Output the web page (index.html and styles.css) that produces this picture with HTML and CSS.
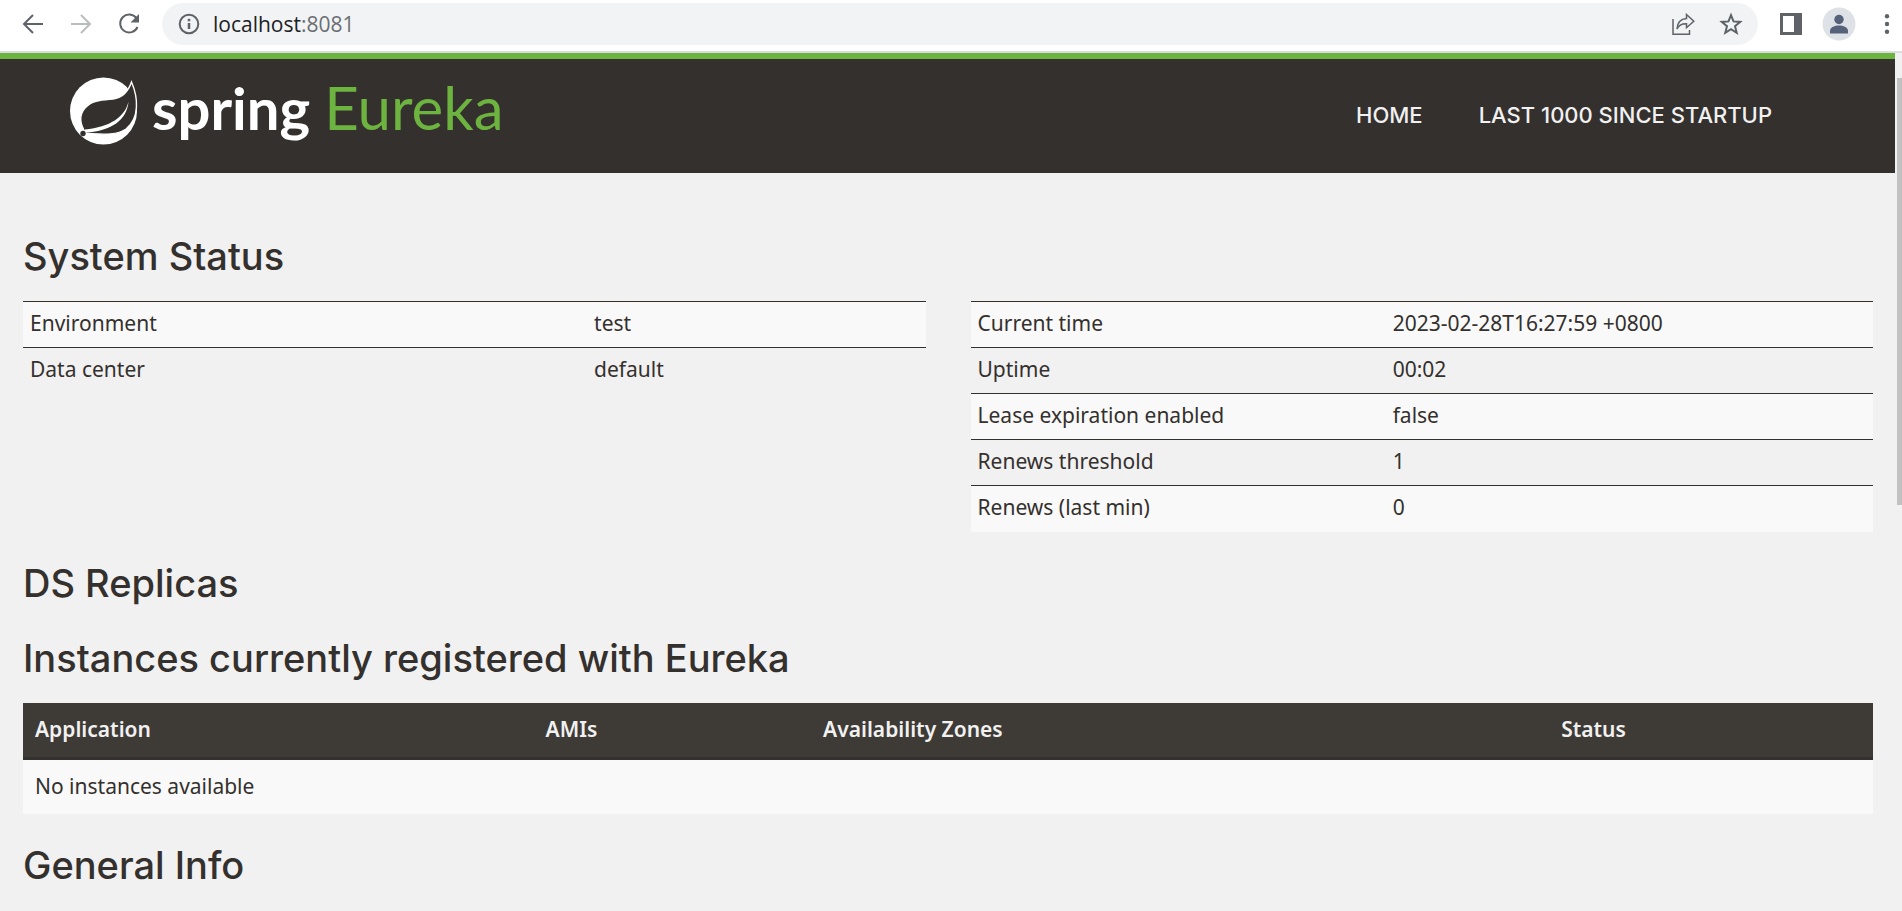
FILE: index.html
```html
<!DOCTYPE html>
<html lang="en">
<head>
<meta charset="utf-8">
<title>Eureka</title>
<link rel="stylesheet" href="styles.css">
</head>
<body>
<div class="toolbar">
  <button class="tool" type="button" aria-label="Back"><svg width="24" height="24" viewBox="0 0 24 24" class="line"><path d="M22 12H3M12 3l-9 9 9 9"/></svg></button>
  <button class="tool tool-off" type="button" aria-label="Forward"><svg width="24" height="24" viewBox="0 0 24 24" class="line"><path d="M2 12h19M12 3l9 9-9 9"/></svg></button>
  <button class="tool" type="button" aria-label="Reload"><svg width="24" height="24" viewBox="0 0 24 24" class="line"><path d="M19.5 6.200A9 9 0 1 0 20.500 15"/><path class="solid" d="M22 2v8.500h-8.500z"/></svg></button>
  <div class="address">
    <svg width="24" height="24" viewBox="0 0 24 24" class="line"><circle cx="12" cy="12" r="9.300"/><path d="M12 11v6" stroke-width="2.500"/><path d="M12 6.800v2.500" stroke-width="2.500"/></svg>
    <span class="url">localhost<span class="port">:8081</span></span>
    <button class="tool" type="button" aria-label="Share"><svg width="24" height="24" viewBox="0 0 24 24" class="line thin"><path d="M2 7v15.200h16.500V18"/><path d="M15.500 2.500l7.300 6.700-7.300 6.500v-4C10 11.500 7.500 13.500 6 17c.3-6 3.500-10 9.500-10.500z"/></svg></button>
    <button class="tool" type="button" aria-label="Bookmark"><svg width="24" height="24" viewBox="0 0 24 24" class="line"><path d="M12 3.200l2.500 6.200 6.700.5-5.200 4.300 1.700 6.600L12 17.200l-5.700 3.600L8 14.200 2.800 9.900l6.700-.5z"/></svg></button>
  </div>
  <button class="tool" type="button" aria-label="Side panel"><svg width="24" height="24" viewBox="0 0 24 24"><path fill="currentColor" fill-rule="evenodd" d="M1 1h22v22H1zM4 4v16h11V4z"/></svg></button>
  <button class="tool profile" type="button" aria-label="Profile"><svg width="34" height="34" viewBox="0 0 34 34"><circle cx="17" cy="17" r="16.500" fill="#dee1e6"/><g fill="#56617a"><circle cx="17" cy="12.500" r="4.700"/><path d="M8 26.500v-2.500c0-4 5-5.500 9-5.500s9 1.500 9 5.500v2.500z"/></g></svg></button>
  <button class="tool" type="button" aria-label="Menu"><svg width="8" height="24" viewBox="0 0 8 24" fill="currentColor"><circle cx="4" cy="4.300" r="2.200"/><circle cx="4" cy="12" r="2.200"/><circle cx="4" cy="19.700" r="2.200"/></svg></button>
</div>
<div class="view">
  <div class="page">
    <header class="navbar">
      <a class="brand" href="#" aria-label="Spring Eureka">
        <svg width="68" height="68" viewBox="0 0 68 68">
          <circle cx="33.500" cy="34" r="33.500" fill="#fff"/>
          <path fill="#34302d" d="M57 10L62 0H68V24L62 20z"/>
          <path fill="#34302d" stroke="#fff" stroke-width="1.400" d="M61.500 5C58 15 52 21 43 22 32 23 22 23 15 31 9 38 9 46 16 56.500 30 57 46 59 56 52 70 41 68 20 61.500 5z"/>
          <path fill="#fff" d="M58.500 24.500C55 40 40 50 15 52.500l-1 3.500C42 54 57 43 58.500 24.500z"/>
          <circle cx="13" cy="56.500" r="2.700" fill="#34302d"/>
        </svg>
        <span class="brand-name">spring</span>
        <span class="brand-product">Eureka</span>
      </a>
      <nav class="links"><a href="#">HOME</a><a href="#">LAST 1000 SINCE STARTUP</a></nav>
    </header>
    <main class="content">
      <h1>System Status</h1>
      <div class="columns">
        <table class="facts env">
          <tr><th scope="row">Environment</th><td>test</td></tr>
          <tr><th scope="row">Data center</th><td>default</td></tr>
        </table>
        <table class="facts runtime">
          <tr><th scope="row">Current time</th><td>2023-02-28T16:27:59 +0800</td></tr>
          <tr><th scope="row">Uptime</th><td>00:02</td></tr>
          <tr><th scope="row">Lease expiration enabled</th><td>false</td></tr>
          <tr><th scope="row">Renews threshold</th><td>1</td></tr>
          <tr><th scope="row">Renews (last min)</th><td>0</td></tr>
        </table>
      </div>
      <h1>DS Replicas</h1>
      <h1>Instances currently registered with Eureka</h1>
      <table class="instances">
        <colgroup><col class="c-app"><col class="c-ami"><col class="c-zone"><col></colgroup>
        <thead><tr><th>Application</th><th>AMIs</th><th>Availability Zones</th><th>Status</th></tr></thead>
        <tbody><tr><td colspan="4">No instances available</td></tr></tbody>
      </table>
      <h1>General Info</h1>
    </main>
  </div>
  <div class="scrollbar"><div class="thumb"></div></div>
</div>
</body>
</html>
```
FILE: styles.css
```css
* { box-sizing: border-box; }
body {
  margin: 0;
  height: 100vh;
  display: flex;
  flex-direction: column;
  overflow: hidden;
  background: #f1f1f1;
  color: #34302d;
  font: 21px/28px "Noto Sans", sans-serif;
}
a { color: inherit; text-decoration: none; }
svg { display: block; }

/* Browser toolbar */
.toolbar {
  flex: none;
  display: flex;
  align-items: center;
  gap: 24px;
  height: 53px;
  padding: 0 11px 3px 21px;
  background: #fff;
  border-bottom: 2px solid #dadce0;
  color: #5f6368;
}
.tool { padding: 0; border: 0; background: none; color: inherit; }
.tool-off { color: #babcbe; }
.profile { margin: 0 3px 0 -5px; }
.line { fill: none; stroke: currentColor; stroke-width: 2; }
.thin { stroke-width: 1.5; }
.solid { fill: currentColor; stroke: none; }
.address {
  flex: 1;
  display: flex;
  align-items: center;
  gap: 24px;
  height: 42px;
  margin: 0 -3px;
  padding: 0 15px;
  border-radius: 21px;
  background: #f1f3f4;
}
.url { flex: 1; margin-left: -12px; color: #202124; font: 21px/28px "Open Sans", sans-serif; }
.port { color: #6a6e73; }

.view { flex: 1; display: flex; min-height: 0; }
.page { flex: 1; overflow: hidden; }
.scrollbar { width: 7px; padding: 25px 0 0 2px; background: #f1f1f1; }
.thumb { height: 51.3%; background: #c1c1c1; }

/* Site header */
.navbar {
  display: flex;
  justify-content: space-between;
  height: 120px;
  padding: 18px 123px 0 70px;
  border-top: 6px solid #6db33f;
  background: #34302d;
  color: #f1f1f1;
}
.brand { display: flex; align-items: baseline; gap: 14px; line-height: 60px; font-family: Lato, sans-serif; }
.brand svg { align-self: flex-start; }
.brand-name { color: #fff; font-size: 58px; font-weight: 700; }
.brand-product { color: #6db33f; font-size: 60px; }
.links { display: flex; gap: 56px; padding-top: 24px; font: 500 22px/28px Inter, sans-serif; }

/* Dashboard */
.content { padding: 32px 22px 0 23px; }
h1 { margin: 31px 0 25px; font: 500 38px/40px Inter, sans-serif; }
h1 + h1 { margin-top: 35px; }
.columns { display: grid; grid-template-columns: 1fr 1fr; gap: 45px; align-items: start; }
table { width: 100%; border-collapse: collapse; table-layout: fixed; }
th, td { text-align: left; font-weight: 400; }
.facts tr { height: 46px; border-top: 1px solid #34302d; }
.facts tr:nth-child(odd), .instances tbody tr { background: #f9f9f9; }
.facts th, .facts td { padding: 0 7px 4px; }
.env th { width: 62.5%; }
.runtime th { width: 46%; }
.instances th { height: 56px; padding: 0 12px 2px; border-bottom: 3px solid #34302d; background: #3e3a35; color: #f1f1f1; font-weight: 600; }
.instances td { height: 55px; padding: 0 12px 2px; }
.c-app { width: 27.6%; }
.c-ami { width: 15%; }
.c-zone { width: 39.9%; }
```
